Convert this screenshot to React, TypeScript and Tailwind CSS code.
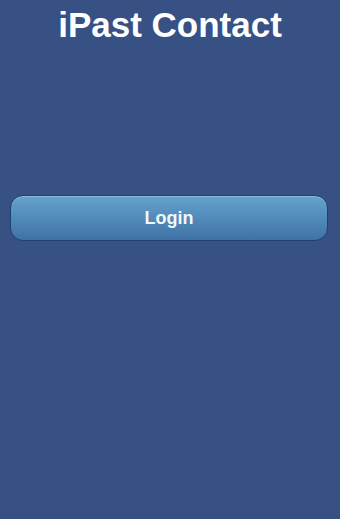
export default function App() {
  return (
    <div className="min-h-screen w-full bg-[#375185] flex flex-col px-[10px] pt-[5px]" style={{ fontFamily: '"Liberation Sans", Arial, sans-serif' }}>
      {/* Title */}
      <h1 className="text-center text-white font-bold text-[35px] leading-[40px]">iPast Contact</h1>

      {/* Login button */}
      <button
        className="mt-[150px] h-[46px] w-[318px] rounded-[13px] border border-[#1f416f] bg-gradient-to-b from-[#66a3cd] to-[#3e72a6] text-[#f4f7fa] font-bold text-[18px] shadow-[inset_0_1px_0_rgba(255,255,255,0.25)]"
      >
        Login
      </button>
    </div>
  );
}
